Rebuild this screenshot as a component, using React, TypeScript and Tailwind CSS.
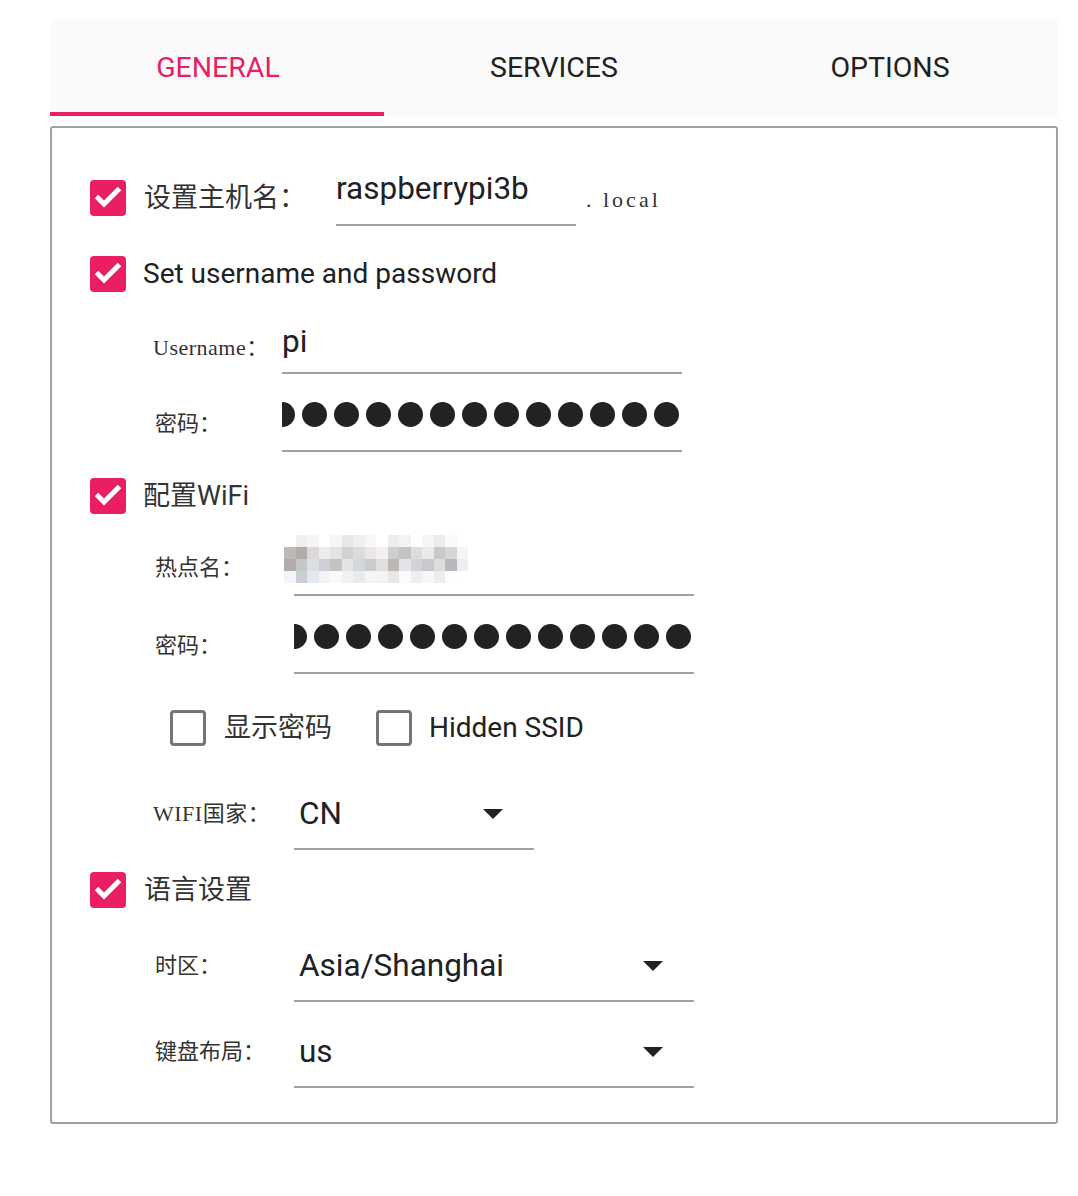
import React from "react";

const mosaic: string[][] = [
  ["bg-[#ffffff]", "bg-[#eeeeee]", "bg-[#f4f4f4]", "bg-[#ffffff]", "bg-[#f6f6f6]", "bg-[#e6e6e6]", "bg-[#eeeeee]", "bg-[#f7f7f7]", "bg-[#ffffff]", "bg-[#ececec]", "bg-[#f2f2f2]", "bg-[#ffffff]", "bg-[#f4f4f4]", "bg-[#ebebeb]", "bg-[#fafafa]", "bg-[#ffffff]"],
  ["bg-[#b8b2b0]", "bg-[#a9a3a2]", "bg-[#d6d4d4]", "bg-[#efe9e9]", "bg-[#e2e2e2]", "bg-[#cdcdcd]", "bg-[#d9d9d9]", "bg-[#e9e5e5]", "bg-[#f1efef]", "bg-[#c9c9c9]", "bg-[#bdbdbd]", "bg-[#dadada]", "bg-[#e9e9e9]", "bg-[#c4c4c4]", "bg-[#d2d2d2]", "bg-[#f5f5f5]"],
  ["bg-[#aaa4a4]", "bg-[#c2c0c0]", "bg-[#d7dce2]", "bg-[#c8cdd3]", "bg-[#bdbdbd]", "bg-[#e2e2e2]", "bg-[#d0d3d6]", "bg-[#c6c6c6]", "bg-[#dcdcdc]", "bg-[#b5b0ae]", "bg-[#dfe2e6]", "bg-[#cfcfcf]", "bg-[#c0c4c8]", "bg-[#dadada]", "bg-[#aeb2b8]", "bg-[#ededed]"],
  ["bg-[#f3f5f7]", "bg-[#c3c9d0]", "bg-[#e3e6ea]", "bg-[#f2f2f2]", "bg-[#fafafa]", "bg-[#eef0f2]", "bg-[#e6e9ec]", "bg-[#f5f5f5]", "bg-[#f0f2f5]", "bg-[#e5e5e5]", "bg-[#fbfbfb]", "bg-[#eceef1]", "bg-[#f7f7f7]", "bg-[#e9ecef]", "bg-[#fdfdfd]", "bg-[#ffffff]"],
];

function Checked() {
  return (
    <div className="flex h-[36px] w-[36px] shrink-0 items-center justify-center rounded-[4px] bg-[#e91e63]">
      <svg width="36" height="36" viewBox="0 0 36 36">
        <path d="M6.5 16.5 L14 24 L29.5 8.5" fill="none" stroke="#ffffff" strokeWidth="5" />
      </svg>
    </div>
  );
}

function Unchecked() {
  return <div className="h-[36px] w-[36px] shrink-0 rounded-[4px] border-[3px] border-[#757575] bg-white" />;
}

function Arrow() {
  return (
    <svg width="20" height="10" viewBox="0 0 20 10">
      <polygon points="0,0 20,0 10,10" fill="#222222" />
    </svg>
  );
}

function Dots() {
  return (
    <div className="mt-[2px] -ml-[12.5px] flex gap-[7px]">
      {Array.from({ length: 13 }).map((_, i) => (
        <div key={i} className="h-[25px] w-[25px] shrink-0 rounded-full bg-[#222222]" />
      ))}
    </div>
  );
}

const subLabel =
  "font-['Liberation_Serif','Noto_Sans_CJK_SC',serif] text-[22px] leading-[28px] text-[#333333]";

export default function App() {
  return (
    <div className="min-h-[1196px] w-[1078px] bg-white pl-[50px] pt-[20px] font-['Roboto','Noto_Sans_CJK_SC',sans-serif] text-[#212121]">
      {/* Tabs */}
      <div className="flex h-[96px] w-[1008px] bg-[#fafafa] text-[28.5px]">
        <div className="relative flex w-[336px] items-center justify-center text-[#e91e63]">
          GENERAL
          <div className="absolute bottom-0 left-0 h-[4px] w-[334px] bg-[#e91e63]" />
        </div>
        <div className="flex w-[336px] items-center justify-center">SERVICES</div>
        <div className="flex w-[336px] items-center justify-center">OPTIONS</div>
      </div>

      {/* Panel */}
      <div className="mt-[10px] h-[998px] w-[1008px] rounded-[3px] border-2 border-[#a0a0a0] pl-[38px] pt-[42px]">
        {/* Hostname */}
        <div className="flex h-[56px] items-center">
          <Checked />
          <div className="ml-[18px] w-[192px] text-[27px] text-[#333333]">设置主机名：</div>
          <div className="h-[56px] w-[240px] border-b-2 border-[#a0a0a0] pt-[1px] text-[31.5px] leading-[36px] text-[#212121]">
            raspberrypi3b
          </div>
          <div className="mb-[15px] ml-[10px] self-end whitespace-pre font-['Liberation_Serif',serif] text-[22px] leading-[22px] tracking-[3px] text-[#333333]">
            . local
          </div>
        </div>

        {/* Set username */}
        <div className="mt-[30px] flex h-[36px] items-center">
          <Checked />
          <div className="ml-[17px] text-[28px]">Set username and password</div>
        </div>

        <div className="mt-[32px] flex items-start pl-[63px]">
          <div className={`mt-[10px] w-[129px] tracking-[0.5px] ${subLabel}`}>Username：</div>
          <div className="h-[50px] w-[400px] border-b-2 border-[#a0a0a0] text-[31.5px] leading-[36px]">pi</div>
        </div>

        <div className="mt-[26px] flex items-start pl-[63px]">
          <div className={`mt-[10px] w-[129px] pl-[2px] ${subLabel}`}>密码：</div>
          <div className="h-[52px] w-[400px] overflow-hidden border-b-2 border-[#a0a0a0]">
            <Dots />
          </div>
        </div>

        {/* WiFi */}
        <div className="mt-[26px] flex h-[36px] items-center">
          <Checked />
          <div className="ml-[17px] text-[27px] text-[#333333]">配置WiFi</div>
        </div>

        <div className="mt-[30px] flex items-start pl-[63px]">
          <div className={`mt-[10px] w-[141px] pl-[2px] ${subLabel}`}>热点名：</div>
          <div className="h-[52px] w-[400px] border-b-2 border-[#a0a0a0]">
            <div className="-ml-[10px] -mt-[9px] flex w-[184px] flex-col opacity-90">
              {mosaic.map((row, r) => (
                <div key={r} className="flex">
                  {row.map((c, i) => (
                    <div key={i} className={`h-[12px] w-[11.5px] ${c}`} />
                  ))}
                </div>
              ))}
            </div>
          </div>
        </div>

        <div className="mt-[26px] flex items-start pl-[63px]">
          <div className={`mt-[10px] w-[141px] pl-[2px] ${subLabel}`}>密码：</div>
          <div className="h-[52px] w-[400px] overflow-hidden border-b-2 border-[#a0a0a0]">
            <Dots />
          </div>
        </div>

        <div className="mt-[36px] flex h-[36px] items-center pl-[80px]">
          <Unchecked />
          <div className="ml-[18px] w-[152px] text-[27px] text-[#333333]">显示密码</div>
          <Unchecked />
          <div className="ml-[17px] text-[28px]">Hidden SSID</div>
        </div>

        <div className="mt-[50px] flex items-start pl-[63px]">
          <div className={`flex h-[36px] w-[141px] items-center tracking-[0.5px] ${subLabel}`}>WIFI国家：</div>
          <div className="w-[240px] border-b-2 border-[#a0a0a0] pb-[16px]">
            <div className="flex h-[36px] items-center justify-between pl-[5px] pr-[31px] text-[31.5px] leading-[36px]">
              <span>CN</span>
              <Arrow />
            </div>
          </div>
        </div>

        {/* Locale */}
        <div className="mt-[22px] flex h-[36px] items-center">
          <Checked />
          <div className="ml-[18px] text-[27px] text-[#333333]">语言设置</div>
        </div>

        <div className="mt-[40px] flex items-start pl-[63px]">
          <div className={`flex h-[36px] w-[141px] items-center pl-[2px] ${subLabel}`}>时区：</div>
          <div className="w-[400px] border-b-2 border-[#a0a0a0] pb-[16px]">
            <div className="flex h-[36px] items-center justify-between pl-[5px] pr-[31px] text-[31.5px] leading-[36px]">
              <span>Asia/Shanghai</span>
              <Arrow />
            </div>
          </div>
        </div>

        <div className="mt-[32px] flex items-start pl-[63px]">
          <div className={`flex h-[36px] w-[141px] items-center pl-[2px] ${subLabel}`}>键盘布局：</div>
          <div className="w-[400px] border-b-2 border-[#a0a0a0] pb-[16px]">
            <div className="flex h-[36px] items-center justify-between pl-[5px] pr-[31px] text-[31.5px] leading-[36px]">
              <span>us</span>
              <Arrow />
            </div>
          </div>
        </div>
      </div>
    </div>
  );
}
